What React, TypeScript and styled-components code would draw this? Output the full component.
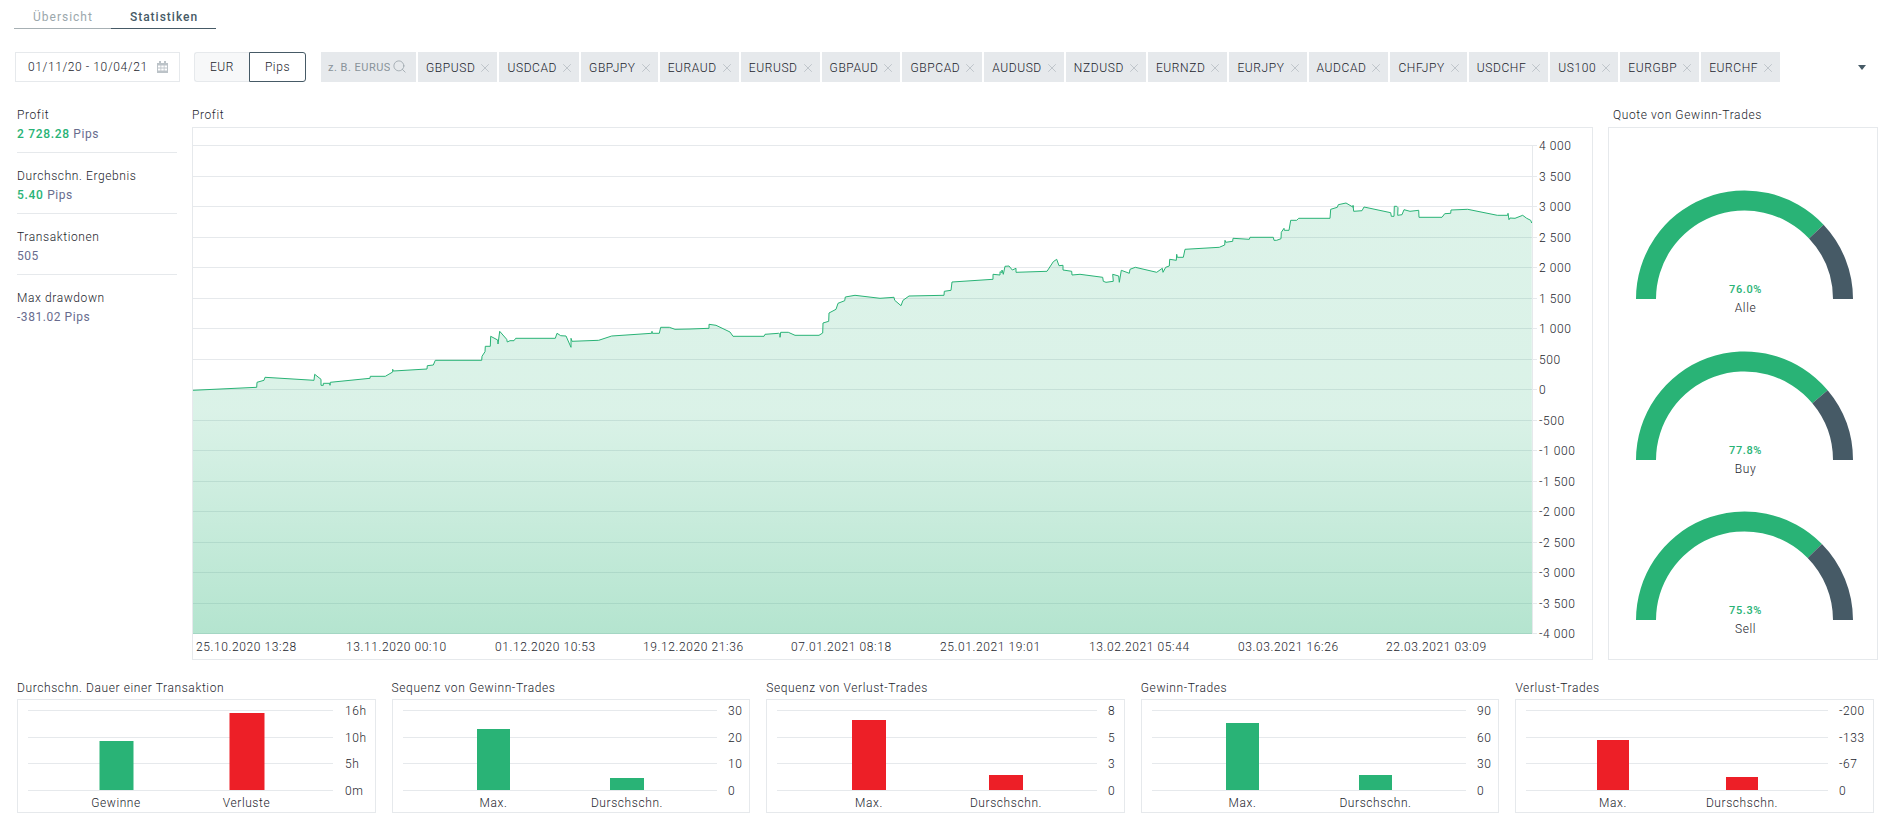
import React from "react";
import styled, { createGlobalStyle } from "styled-components";
import { Search, X } from "lucide-react";

const GREEN = "#29b376";
const RED = "#ed1f27";
const SLATE = "#465a66";
const LINE = "#e6e9ec";
const INK = "#1b242c";

const Global = createGlobalStyle`
  html, body { margin: 0; padding: 0; background: #fff; }
  body { font-family: Roboto, "Liberation Sans", sans-serif; font-size: 12px; font-weight: 300; color: ${INK}; letter-spacing: .6px; }
  * { box-sizing: border-box; }
`;

const Page = styled.div`
  width: 1895px;
  height: 822px;
  overflow: hidden;
  padding: 0 17px 0 15px;
`;
const TabBar = styled.div`
  display: flex;
  height: 29px;
  margin-left: -1px;
`;
const Tab = styled.div<{ $active?: boolean }>`
  height: 29px;
  padding: 6px 18px 0 19px;
  display: flex;
  align-items: center;
  font-size: 12px;
  letter-spacing: 1px;
  color: ${(p) => (p.$active ? SLATE : "#9ba7ac")};
  font-weight: ${(p) => (p.$active ? 500 : 400)};
  border-bottom: 1px solid ${(p) => (p.$active ? SLATE : "#a7b0b4")};
`;
const TopBar = styled.div`
  display: flex;
  align-items: stretch;
  height: 30px;
  margin-top: 23px;
  padding-right: 12px;
`;
const DateBox = styled.div`
  width: 165px;
  border: 1px solid ${LINE};
  display: flex;
  align-items: center;
  justify-content: space-between;
  padding: 0 11px 0 12px;
  margin-right: 14px;
  color: ${INK};
`;
const Toggle = styled.div`
  display: flex;
  width: 112px;
  margin-right: 15px;
`;
const ToggleButton = styled.div<{ $active?: boolean }>`
  flex: ${(p) => (p.$active ? "0 0 57px" : "1")};
  display: flex;
  align-items: center;
  justify-content: center;
  background: ${(p) => (p.$active ? "#fff" : "#f7f8f9")};
  border: 1px solid ${(p) => (p.$active ? SLATE : LINE)};
  border-radius: ${(p) => (p.$active ? "0 3px 3px 0" : "3px 0 0 3px")};
  border-right: ${(p) => (p.$active ? undefined : "none")};
`;
const TagSearch = styled.div`
  width: 95px;
  background: ${LINE};
  display: flex;
  align-items: center;
  padding: 0 7px 0 7px;
  margin-right: 2px;
  color: #89939a;
  font-size: 11px;
  font-weight: 400;
  letter-spacing: .5px;
  svg { flex: none; margin-left: 2px; margin-top: -1px; color: #9aa4aa; }
`;
const Placeholder = styled.span`
  width: 62px;
  overflow: hidden;
  white-space: nowrap;
`;
const Tags = styled.div`
  display: flex;
  gap: 2px;
  flex: 1;
`;
const Tag = styled.div`
  display: flex;
  align-items: center;
  gap: 3px;
  padding: 2px 5px 0 8px;
  background: ${LINE};
  color: ${INK};
  svg { color: #bcc3c8; }
`;
const Caret = styled.div`
  align-self: center;
  width: 0;
  height: 0;
  border-left: 4px solid transparent;
  border-right: 4px solid transparent;
  border-top: 5px solid ${SLATE};
`;
const MainRow = styled.div`
  display: grid;
  grid-template-columns: 160px 1401px 270px;
  column-gap: 15px;
  margin-top: 25px;
  padding-left: 2px;
`;
const Stat = styled.div`
  padding: 1px 0 11px;
  margin-bottom: 15px;
  border-bottom: 1px solid ${LINE};
  &:last-child { border-bottom: none; }
`;
const StatLabel = styled.div`
  line-height: 14px;
  margin-bottom: 5px;
  color: ${INK};
`;
const StatValue = styled.div`
  line-height: 14px;
  font-weight: 400;
  letter-spacing: .55px;
  color: #686c8e;
`;
const Good = styled.span`
  color: ${GREEN};
  font-weight: 500;
  letter-spacing: .7px;
`;
const PanelTitle = styled.div`
  line-height: 14px;
  padding-top: 1px;
  margin-bottom: 5px;
  color: ${INK};
`;
const TitleInset = styled(PanelTitle)`
  padding-left: 5px;
`;
const Panel = styled.div`
  height: 533px;
  border: 1px solid ${LINE};
  svg { display: block; }
`;
const GaugeColumn = styled(Panel)`
  padding-top: 28px;
  display: flex;
  flex-direction: column;
`;
const BottomRow = styled.div`
  display: grid;
  grid-template-columns: repeat(5, 358.6px);
  column-gap: 16px;
  margin-top: 21px;
  padding-left: 2px;
`;
const MiniTitle = styled.div`
  line-height: 14px;
  margin-bottom: 4px;
  color: ${INK};
`;
const MiniBox = styled.div`
  height: 114px;
  border: 1px solid ${LINE};
  svg { display: block; }
`;
const ChartText = styled.text`
  font-family: Roboto, "Liberation Sans", sans-serif;
  font-size: 12px;
  font-weight: 300;
  letter-spacing: .6px;
  fill: ${INK};
  dominant-baseline: central;
`;
const GaugeValue = styled(ChartText)`
  font-size: 11px;
  font-weight: 500;
  fill: ${GREEN};
`;

const SYMBOLS = ["GBPUSD","USDCAD","GBPJPY","EURAUD","EURUSD","GBPAUD","GBPCAD","AUDUSD","NZDUSD","EURNZD","EURJPY","AUDCAD","CHFJPY","USDCHF","US100","EURGBP","EURCHF"];

const toPts = (raw: number[][], ox: number, oy: number) => raw.map(([x, y]) => [ox + x / 3, oy + y / 3]);
const A = toPts([[8,271],[200,262],[201,247],[222,241],[225,232],[372,241],[374,223],[393,238],[393,256],[400,256],[400,250],[419,250],[420,256],[421,247],[540,235],[541,229],[586,229],[608,216],[608,208],[610,213],[711,207],[712,197],[730,195],[736,181],[875,181],[876,169],[885,155],[886,139],[901,139],[902,109],[923,120],[924,132],[929,94],[950,118],[952,126],[960,122],[972,122],[977,115],[1096,115],[1101,100],[1112,107],[1128,108],[1143,142],[1143,115],[1146,124],[1226,121],[1265,108],[1385,100],[1386,94],[1387,100],[1408,100],[1412,82],[1438,82],[1455,88],[1500,87]], 190, 300);
const B = toPts([[87,295],[87,283],[108,286],[150,306],[159,319],[252,319],[255,313],[296,310],[300,313],[300,322],[302,307],[325,307],[345,316],[417,316],[428,309],[429,279],[446,274],[447,249],[468,238],[474,220],[494,212],[496,201],[525,196],[600,205],[642,202],[644,211],[663,227],[669,211],[687,198],[792,196],[793,184],[813,181],[816,156],[939,148],[939,133],[960,135],[960,125],[965,128],[966,120],[970,133],[975,109],[987,108],[997,120],[1008,115],[1008,127],[1101,124],[1120,95],[1130,88],[1137,107],[1149,106],[1149,120],[1175,124],[1176,135]], 680, 230);
const C = toPts([[0,253],[68,262],[70,274],[78,277],[100,274],[98,253],[116,258],[118,277],[124,241],[148,250],[150,238],[166,232],[230,247],[247,235],[249,247],[257,232],[268,228],[269,208],[289,211],[290,193],[292,202],[310,202],[315,178],[418,172],[434,165],[435,151],[437,157],[458,154],[459,145],[508,148],[510,142],[580,142],[582,151],[590,151],[603,146],[604,127],[612,115],[613,121],[627,121],[632,91],[650,91],[656,85],[750,85],[752,58],[772,52],[775,44],[798,39],[820,52],[819,46],[821,64],[846,62],[852,51],[932,68],[934,79],[942,79],[943,49],[950,49],[954,53],[953,76],[966,74],[972,59],[990,64],[1016,61],[1017,82],[1086,82],[1094,71],[1112,70],[1113,60],[1163,58],[1252,76],[1283,76],[1284,70],[1287,89],[1290,84],[1305,85],[1328,76],[1340,85],[1352,91],[1355,99]], 1080, 190);
const SERIES = [...A, ...B, ...C];
const linePath = SERIES.map(([x, y], i) => `${i ? "L" : "M"}${x.toFixed(1)} ${y.toFixed(1)}`).join(" ");
const areaPath = `${linePath} L1532 634 L193 634 Z`;

const Y_LABELS = ["4 000","3 500","3 000","2 500","2 000","1 500","1 000","500","0","-500","-1 000","-1 500","-2 000","-2 500","-3 000","-3 500","-4 000"];
const X_LABELS: [number, string][] = [[196,"25.10.2020 13:28"],[346,"13.11.2020 00:10"],[495,"01.12.2020 10:53"],[643,"19.12.2020 21:36"],[791,"07.01.2021 08:18"],[940,"25.01.2021 19:01"],[1089,"13.02.2021 05:44"],[1238,"03.03.2021 16:26"],[1386,"22.03.2021 03:09"]];

function CalendarIcon() {
  return (
    <svg width="11" height="12" viewBox="0 0 11 12" aria-hidden="true">
      <path d="M0 2h2V0h2v2h3V0h2v2h2v10H0z" fill="#bcc3c8" />
      <path d="M1 4.5h2.5v2H1zM4.25 4.5h2.5v2h-2.5zM7.5 4.5H10v2H7.5zM1 7.5h2.5v2H1zM4.25 7.5h2.5v2h-2.5zM7.5 7.5H10v2H7.5z" fill="#fff" />
    </svg>
  );
}

function ProfitChart() {
  return (
    <svg width="1399" height="531" viewBox="193 128 1399 531">
      <defs>
        <linearGradient id="area" x1="0" y1="190" x2="0" y2="634" gradientUnits="userSpaceOnUse">
          <stop offset="0" stopColor={GREEN} stopOpacity=".16" />
          <stop offset=".5" stopColor={GREEN} stopOpacity=".17" />
          <stop offset="1" stopColor={GREEN} stopOpacity=".35" />
        </linearGradient>
      </defs>
      {Y_LABELS.map((l, i) => {
        const y = Math.round(145 + i * 30.5) + 0.5;
        return (
          <g key={l}>
            <line x1="193" x2="1537" y1={y} y2={y} stroke={LINE} />
            <ChartText x="1539" y={y}>{l}</ChartText>
          </g>
        );
      })}
      <line x1="1532.5" x2="1532.5" y1="145" y2="634" stroke={LINE} />
      <path d={areaPath} fill="url(#area)" />
      <path d={linePath} fill="none" stroke={GREEN} strokeWidth="1" />
      {X_LABELS.map(([x, l]) => (
        <ChartText key={l} x={x} y="647">{l}</ChartText>
      ))}
    </svg>
  );
}

function arc(cx: number, cy: number, R: number, r: number, a0: number, a1: number) {
  const pt = (rad: number, a: number) => `${(cx + rad * Math.cos(a)).toFixed(2)} ${(cy - rad * Math.sin(a)).toFixed(2)}`;
  return `M${pt(R, a0)} A${R} ${R} 0 0 1 ${pt(R, a1)} L${pt(r, a1)} A${r} ${r} 0 0 0 ${pt(r, a0)} Z`;
}

function Gauge({ value, name }: { value: number; name: string }) {
  const cx = 135.5;
  const cy = 143;
  const split = Math.PI * (1 - value / 100);
  return (
    <svg width="268" height="160.5" viewBox="0 0 268 160.5">
      <path d={arc(cx, cy, 108.5, 88.5, Math.PI, split)} fill={GREEN} />
      <path d={arc(cx, cy, 108.5, 88.5, split, 0)} fill={SLATE} />
      <GaugeValue x={cx + 1} y="133" textAnchor="middle">{value.toFixed(1)}%</GaugeValue>
      <ChartText x={cx + 1} y="152" textAnchor="middle">{name}</ChartText>
    </svg>
  );
}

type Bar = { x: number; w: number; top: number; label: string; c: number };
type Mini = { title: string; color: [string, string]; ticks: string[]; g0: number; g1: number; lx: number; bars: [Bar, Bar] };

const GRID_Y = [10.5, 37.5, 63.5, 90.5];
const MINIS: Mini[] = [
  { title: "Durchschn. Dauer einer Transaktion", color: [GREEN, RED], ticks: ["16h","10h","5h","0m"], g0: 10, g1: 315, lx: 327,
    bars: [{ x: 81.5, w: 34, top: 41, label: "Gewinne", c: 98 }, { x: 211.5, w: 35, top: 13, label: "Verluste", c: 228.5 }] },
  { title: "Sequenz von Gewinn-Trades", color: [GREEN, GREEN], ticks: ["30","20","10","0"], g0: 10, g1: 324, lx: 335,
    bars: [{ x: 84, w: 33, top: 29, label: "Max.", c: 100.5 }, { x: 217, w: 34, top: 78, label: "Durschschn.", c: 234 }] },
  { title: "Sequenz von Verlust-Trades", color: [RED, RED], ticks: ["8","5","3","0"], g0: 10, g1: 330, lx: 341,
    bars: [{ x: 85, w: 34, top: 20, label: "Max.", c: 102 }, { x: 222, w: 34, top: 75, label: "Durschschn.", c: 239 }] },
  { title: "Gewinn-Trades", color: [GREEN, GREEN], ticks: ["90","60","30","0"], g0: 10, g1: 324, lx: 335,
    bars: [{ x: 84, w: 33, top: 23, label: "Max.", c: 100.5 }, { x: 217, w: 33, top: 75, label: "Durschschn.", c: 233.5 }] },
  { title: "Verlust-Trades", color: [RED, RED], ticks: ["-200","-133","-67","0"], g0: 10, g1: 312, lx: 323,
    bars: [{ x: 81, w: 32, top: 40, label: "Max.", c: 97 }, { x: 210, w: 32, top: 77, label: "Durschschn.", c: 226 }] },
];

function MiniChart({ m }: { m: Mini }) {
  return (
    <svg width="356.6" height="112" viewBox="0 0 356.6 112">
      {GRID_Y.map((y, i) => (
        <g key={y}>
          <line x1={m.g0} x2={m.g1} y1={y} y2={y} stroke={LINE} />
          <ChartText x={m.lx} y={y + 1}>{m.ticks[i]}</ChartText>
        </g>
      ))}
      {m.bars.map((b, i) => (
        <g key={b.label}>
          <rect x={b.x} y={b.top} width={b.w} height={90 - b.top} fill={m.color[i]} />
          <ChartText x={b.c} y="103" textAnchor="middle">{b.label}</ChartText>
        </g>
      ))}
    </svg>
  );
}

export default function App() {
  return (
    <Page>
      <Global />
      <TabBar>
        <Tab>Übersicht</Tab>
        <Tab $active>Statistiken</Tab>
      </TabBar>
      <TopBar>
        <DateBox>
          <span>01/11/20 - 10/04/21</span>
          <CalendarIcon />
        </DateBox>
        <Toggle>
          <ToggleButton>EUR</ToggleButton>
          <ToggleButton $active>Pips</ToggleButton>
        </Toggle>
        <TagSearch>
          <Placeholder>z. B. EURUSD</Placeholder>
          <Search size={15} strokeWidth={1.3} />
        </TagSearch>
        <Tags>
          {SYMBOLS.map((s) => (
            <Tag key={s}>
              {s}
              <X size={14} strokeWidth={1.6} />
            </Tag>
          ))}
        </Tags>
        <Caret />
      </TopBar>
      <MainRow>
        <div>
          <Stat>
            <StatLabel>Profit</StatLabel>
            <StatValue><Good>2 728.28</Good> Pips</StatValue>
          </Stat>
          <Stat>
            <StatLabel>Durchschn. Ergebnis</StatLabel>
            <StatValue><Good>5.40</Good> Pips</StatValue>
          </Stat>
          <Stat>
            <StatLabel>Transaktionen</StatLabel>
            <StatValue>505</StatValue>
          </Stat>
          <Stat>
            <StatLabel>Max drawdown</StatLabel>
            <StatValue>-381.02 Pips</StatValue>
          </Stat>
        </div>
        <div>
          <PanelTitle>Profit</PanelTitle>
          <Panel><ProfitChart /></Panel>
        </div>
        <div>
          <TitleInset>Quote von Gewinn-Trades</TitleInset>
          <GaugeColumn>
            <Gauge value={76.0} name="Alle" />
            <Gauge value={77.8} name="Buy" />
            <Gauge value={75.3} name="Sell" />
          </GaugeColumn>
        </div>
      </MainRow>
      <BottomRow>
        {MINIS.map((m) => (
          <div key={m.title}>
            <MiniTitle>{m.title}</MiniTitle>
            <MiniBox><MiniChart m={m} /></MiniBox>
          </div>
        ))}
      </BottomRow>
    </Page>
  );
}
